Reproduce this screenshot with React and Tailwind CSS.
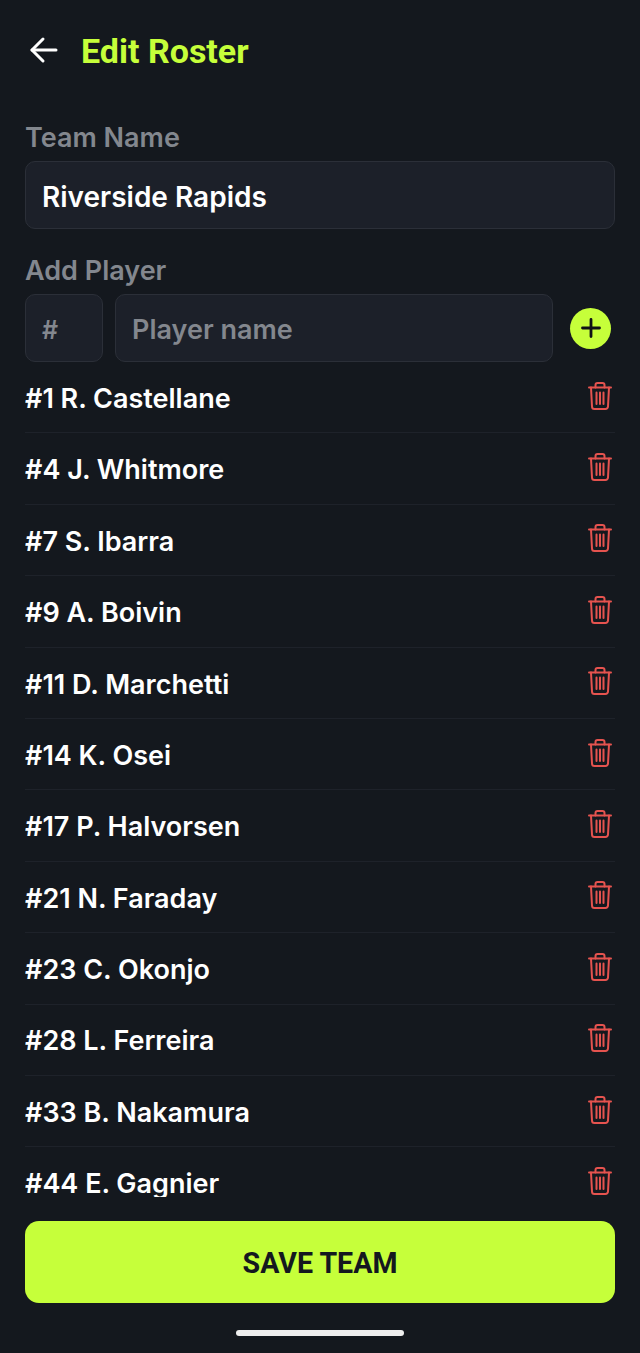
import React from 'react'

const players = [
  '#1 R. Castellane',
  '#4 J. Whitmore',
  '#7 S. Ibarra',
  '#9 A. Boivin',
  '#11 D. Marchetti',
  '#14 K. Osei',
  '#17 P. Halvorsen',
  '#21 N. Faraday',
  '#23 C. Okonjo',
  '#28 L. Ferreira',
  '#33 B. Nakamura',
  '#44 E. Gagnier',
]

function TrashIcon() {
  return (
    <svg width="26" height="30" viewBox="0 0 26 30" fill="none" stroke="#e5534f" strokeWidth="2" strokeLinecap="round" strokeLinejoin="round" className="mb-[3px]">
      <path d="M2 6.500h22" />
      <path d="M8.500 6.500V4A2 2 0 0 1 10.500 2h5a2 2 0 0 1 2 2v2.500" />
      <path d="M4 6.500l1 19a2.500 2.500 0 0 0 2.500 2.500h11a2.500 2.500 0 0 0 2.500-2.500l1-19" />
      <path d="M9.500 11.500v11.500M13 11.500v11.500M16.500 11.500v11.500" />
    </svg>
  )
}

export default function App() {
  return (
    <div className="h-[1353px] w-[640px] overflow-hidden bg-[#14181e] flex flex-col font-['Inter',sans-serif]">
      <header className="flex items-center pl-[29px] pt-[30px] h-[72px]">
        <svg width="30" height="28" viewBox="0 0 30 28" fill="none" stroke="#ffffff" strokeWidth="3" strokeLinecap="round" strokeLinejoin="round" className="mb-[3px]">
          <path d="M3 14h24" />
          <path d="M14 3L3 14l11 11" />
        </svg>
        <h1 className="ml-[22px] font-['Roboto',sans-serif] font-bold text-[34px] leading-[38px] text-[#c6ff3a]">Edit Roster</h1>
      </header>

      <div className="px-[25px] mt-[51px]">
        <label className="block text-[27px] leading-[30px] font-semibold text-[#83878e]">Team Name</label>
        <div className="mt-[8px] h-[68px] rounded-[10px] border border-[#2b2f38] bg-[#1c2029] flex items-center px-[16px] pt-[3px] text-[28px] font-semibold text-white">
          Riverside Rapids
        </div>

        <label className="block mt-[27px] text-[27px] leading-[30px] font-semibold text-[#83878e]">Add Player</label>
        <div className="mt-[8px] flex items-center">
          <div className="w-[78px] h-[68px] rounded-[10px] border border-[#2b2f38] bg-[#1c2029] flex items-center px-[16px] pt-[5px] text-[25px] font-semibold text-[#83878e]">#</div>
          <div className="ml-[12px] w-[438px] h-[68px] rounded-[10px] border border-[#2b2f38] bg-[#1c2029] flex items-center px-[16px] pt-[5px] text-[27px] font-semibold text-[#83878e]">Player name</div>
          <div className="ml-[17px] w-[41px] h-[41px] rounded-full bg-[#c6ff3a] flex items-center justify-center">
            <svg width="22" height="22" viewBox="0 0 22 22" fill="none" stroke="#0f1216" strokeWidth="2.800" strokeLinecap="round">
              <path d="M11 2.500v17M2.500 11h17" />
            </svg>
          </div>
        </div>

        <ul className="h-[835px] overflow-hidden">
          {players.map((p) => (
            <li key={p} className="h-[71.4px] flex items-center justify-between border-b border-[#1e222a] pr-[2px]">
              <span className="pt-[4px] text-[27px] font-semibold text-white">{p}</span>
              <TrashIcon />
            </li>
          ))}
        </ul>

        <button className="mt-[24px] w-[590px] h-[82px] rounded-[14px] bg-[#c6ff3a] pt-[2px] font-['Roboto',sans-serif] font-bold text-[28.600px] text-[#14181f]">
          SAVE TEAM
        </button>
      </div>

      <div className="mt-[27px] mx-auto w-[168px] h-[6px] rounded-full bg-[#eeeeee]" />
    </div>
  )
}
